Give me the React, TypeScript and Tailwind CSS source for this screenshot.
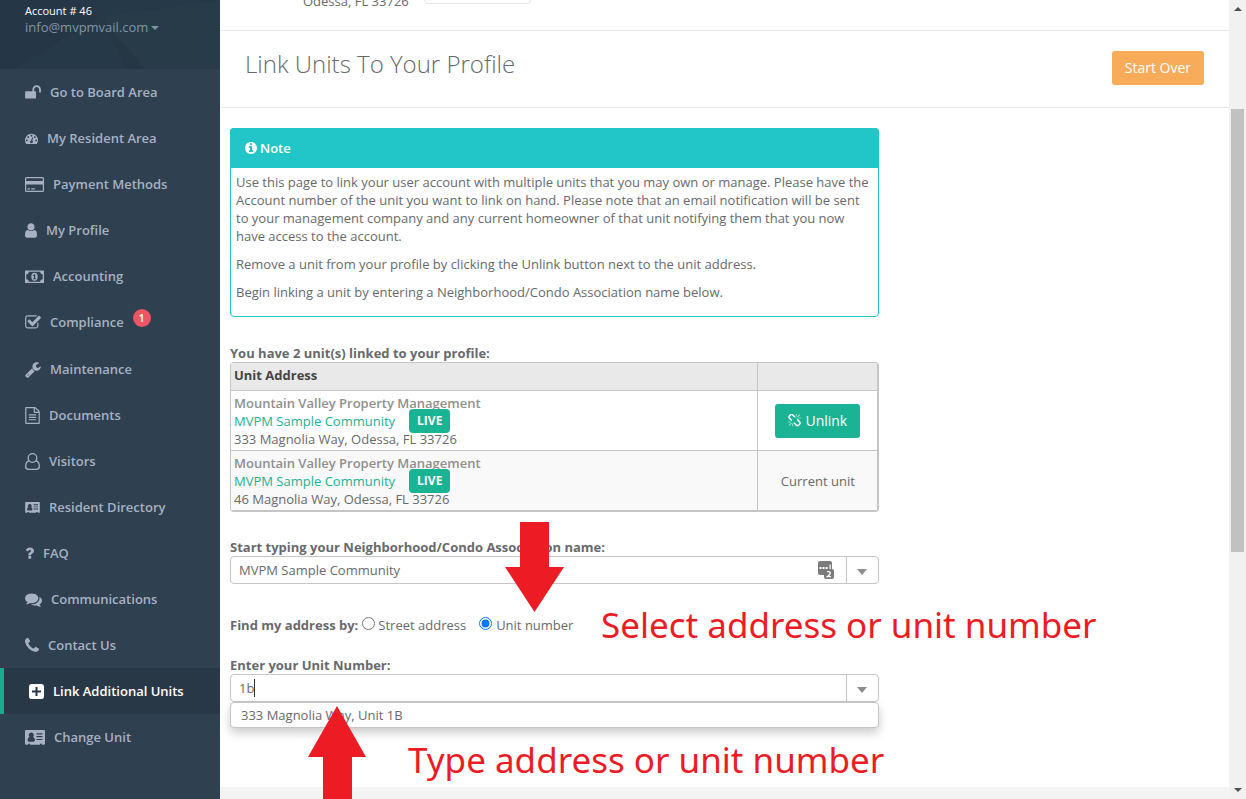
import type { ReactNode } from "react";
import { clsx } from "clsx";

type IconProps = { box?: string; className?: string; children: ReactNode };

const Icon = ({ box = "0 0 1792 1792", className, children }: IconProps) => (
    <svg viewBox={box} className={clsx("shrink-0", className)} fill="currentColor" aria-hidden="true">
        {children}
    </svg>
);

const UnlockIcon = () => (
    <Icon box="64 0 1664 1792" className="w-4 h-[17px]">
        <path d="M1728 576v256q0 26-19 45t-45 19h-64q-26 0-45-19t-19-45v-256q0-106-75-181t-181-75-181 75-75 181v192h96q40 0 68 28t28 68v576q0 40-28 68t-68 28h-960q-40 0-68-28t-28-68v-576q0-40 28-68t68-28h672v-192q0-185 131.5-316.5t316.5-131.5 316.5 131.5 131.5 316.5z" />
    </Icon>
);

const DashboardIcon = () => (
    <Icon className="size-[13px]">
        <path d="M384 1152q0-53-37.5-90.5t-90.5-37.5-90.5 37.5-37.5 90.5 37.5 90.5 90.5 37.5 90.5-37.5 37.5-90.5zm192-448q0-53-37.5-90.5t-90.5-37.5-90.5 37.5-37.5 90.5 37.5 90.5 90.5 37.5 90.5-37.5 37.5-90.5zm428 481l101-382q6-26-7.5-48.5t-38.5-29.5-48 6.5-30 39.5l-101 382q-60 5-107 43.5t-63 98.5q-20 77 20 146t117 89 146-20 89-117q16-60-6-117t-72-91zm660-33q0-53-37.5-90.5t-90.5-37.5-90.5 37.5-37.5 90.5 37.5 90.5 90.5 37.5 90.5-37.5 37.5-90.5zm-640-640q0-53-37.5-90.5t-90.5-37.5-90.5 37.5-37.5 90.5 37.5 90.5 90.5 37.5 90.5-37.5 37.5-90.5zm448 192q0-53-37.5-90.5t-90.5-37.5-90.5 37.5-37.5 90.5 37.5 90.5 90.5 37.5 90.5-37.5 37.5-90.5zm320 448q0 261-141 483-19 29-54 29h-1402q-35 0-54-29-141-221-141-483 0-182 71-348t191-286 286-191 348-71 348 71 286 191 191 286 71 348z" />
    </Icon>
);

const CardIcon = () => (
    <Icon box="0 0 19 17" className="w-[19px] h-[17px]">
        <path fillRule="evenodd" d="M1.600 1h15.800A1.600 1.600 0 0 1 19 2.600v11.800a1.600 1.600 0 0 1-1.600 1.600H1.600A1.600 1.600 0 0 1 0 14.400V2.600A1.600 1.600 0 0 1 1.600 1zM1.700 2.200a.5.5 0 0 0-.5.5V5h16.600V2.700a.5.5 0 0 0-.5-.5zM1.200 8.500v5.800a.5.5 0 0 0 .5.500h15.600a.5.500 0 0 0 .5-.5V8.500zM2.500 12.300h2.500v1.200H2.500zM6.200 12.300h3.700v1.200H6.200z" />
    </Icon>
);

const UserIcon = () => (
    <Icon box="256 0 1280 1792" className="w-3 h-[17px]">
        <path d="M1536 1399q0 109-62.500 187t-150.500 78h-854q-88 0-150.500-78t-62.500-187q0-85 8.500-160.500t31.500-152 58.500-131 94-89 134.500-34.500q131 128 313 128t313-128q76 0 134.500 34.500t94 89 58.500 131 31.500 152 8.500 160.500zm-256-887q0 159-112.500 271.500t-271.500 112.500-271.500-112.500-112.500-271.500 112.500-271.500 271.500-112.500 271.500 112.500 112.500 271.500z" />
    </Icon>
);

const MoneyIcon = () => (
    <Icon box="0 0 19 17" className="w-[19px] h-[17px]">
        <path fillRule="evenodd" d="M.6 2.500h17.800a.6.600 0 0 1 .6.600v11.300a.6.600 0 0 1-.6.600H.6a.6.600 0 0 1-.6-.6V3.100a.6.600 0 0 1 .6-.6zM3.800 3.800A2.500 2.500 0 0 1 1.300 6.300v5a2.500 2.500 0 0 1 2.500 2.500h11.400a2.500 2.500 0 0 1 2.500-2.500v-5a2.500 2.500 0 0 1-2.500-2.500z" />
        <ellipse cx="9.500" cy="8.800" rx="3.200" ry="4" />
        <path fill="#2f4050" d="M9.200 6.200h1v4.200h1v.9H7.900v-.9h1.100V7.700l-.8.500-.5-.7z" />
    </Icon>
);

const CheckIcon = () => (
    <Icon box="64 0 1664 1792" className="w-4 h-[17px]">
        <path d="M1472 930v318q0 119-84.500 203.500t-203.500 84.500h-832q-119 0-203.500-84.500t-84.500-203.500v-832q0-119 84.500-203.500t203.500-84.500h832q63 0 117 25 15 7 18 23 3 17-9 29l-49 49q-10 10-23 10-3 0-9-2-23-6-45-6h-832q-66 0-113 47t-47 113v832q0 66 47 113t113 47h832q66 0 113-47t47-113v-254q0-13 9-22l64-64q10-10 23-10 6 0 12 3 20 8 20 29zm231-489l-814 814q-24 24-57 24t-57-24l-430-430q-24-24-24-57t24-57l110-110q24-24 57-24t57 24l263 263 647-647q24-24 57-24t57 24l110 110q24 24 24 57t-24 57z" />
    </Icon>
);

const WrenchIcon = () => (
    <Icon box="64 0 1664 1792" className="w-4 h-[17px]">
        <path d="M448 1472q0-26-19-45t-45-19-45 19-19 45 19 45 45 19 45-19 19-45zm644-420l-682 682q-37 37-90 37-52 0-91-37l-106-108q-38-36-38-90 0-53 38-91l681-681q39 98 114.500 173.500t173.500 114.500zm634-435q0 39-23 106-47 134-164.500 217.500t-258.500 83.500q-185 0-316.500-131.500t-131.500-316.500 131.500-316.500 316.500-131.500q58 0 121.500 16.500t107.500 46.500q16 11 16 28t-16 28l-293 169v224l193 107q5-3 79-48.500t135.500-81 70.500-35.500q15 0 23.500 10t8.500 25z" />
    </Icon>
);

const FileIcon = () => (
    <Icon box="128 0 1536 1792" className="w-[15px] h-[17px]">
        <path d="M1596 380q28 28 48 76t20 88v1152q0 40-28 68t-68 28h-1344q-40 0-68-28t-28-68v-1600q0-40 28-68t68-28h896q40 0 88 20t76 48zm-444-244v376h376q-10-29-22-41l-313-313q-12-12-41-22zm384 1528v-1024h-416q-40 0-68-28t-28-68v-416h-768v1536h1280zm-1024-864q0-14 9-23t23-9h704q14 0 23 9t9 23v64q0 14-9 23t-23 9h-704q-14 0-23-9t-9-23v-64zm736 224q14 0 23 9t9 23v64q0 14-9 23t-23 9h-704q-14 0-23-9t-9-23v-64q0-14 9-23t23-9h704zm0 256q14 0 23 9t9 23v64q0 14-9 23t-23 9h-704q-14 0-23-9t-9-23v-64q0-14 9-23t23-9h704z" />
    </Icon>
);

const VisitorIcon = () => (
    <Icon box="0 0 15 17" className="w-[15px] h-[17px]">
        <g fill="none" stroke="currentColor" strokeWidth="1.300">
            <circle cx="7.500" cy="5" r="4.300" />
            <path d="M4.300 7.800C1.600 8.200.7 10.500.7 13.200c0 1.800 1.200 3.100 2.800 3.100h8c1.600 0 2.800-1.300 2.800-3.100 0-2.700-.9-5-3.600-5.400" />
        </g>
    </Icon>
);

const IdCardIcon = ({ className }: { className: string }) => (
    <Icon box="0 0 20 15" className={className}>
        <path fillRule="evenodd" d="M1.200 0h17.600A1.200 1.200 0 0 1 20 1.200v12.300a1.200 1.200 0 0 1-1.200 1.200H17v-1h-2v1H5v-1H3v1H1.200A1.200 1.200 0 0 1 0 13.500V1.200A1.200 1.200 0 0 1 1.200 0zM6.200 2.600a2.600 2.600 0 0 0-1.700 4.500C3.200 7.500 2.600 8.800 2.600 10.300c0 .8.500 1.400 1.200 1.400h4.900c.7 0 1.200-.6 1.200-1.400 0-1.500-.6-2.800-1.900-3.200a2.600 2.600 0 0 0-1.800-4.500zM11.500 3.200v1.200h6V3.200zM11.500 6v1.200h6V6zM11.500 8.900v1.200h6V8.900z" />
    </Icon>
);

const QuestionIcon = () => (
    <Icon box="384 128 1024 1536" className="w-[9px] h-[14px]">
        <path d="M1088 1256v240q0 16-12 28t-28 12h-240q-16 0-28-12t-12-28v-240q0-16 12-28t28-12h240q16 0 28 12t12 28zm316-600q0 54-15.500 101t-35 76.500-55 59.500-57.500 43.500-61 35.500q-41 23-68.500 65t-27.500 67q0 17-12 32.500t-28 15.500h-240q-15 0-25.500-18.500t-10.500-37.500v-45q0-83 65-156.500t143-108.500q59-27 84-56t25-76q0-42-46.500-74t-107.500-32q-65 0-108 29-35 25-107 115-13 16-31 16-12 0-25-8l-164-125q-13-10-15.500-25t5.500-28q160-266 464-266 80 0 161 31t146 83 106 127.500 41 158.500z" />
    </Icon>
);

const CommentsIcon = () => (
    <Icon className="size-[17px]">
        <path d="M1408 768q0 139-94 257t-256.500 186.500-353.500 68.500q-86 0-176-16-124 88-278 128-36 9-86 16h-3q-11 0-20.500-8t-11.500-21q-1-3-1-6.500t.5-6.500 2-6l2.500-5 3.500-5.500 4-5 4.500-5 4-4.500q5-6 23-25t26-29.500 22.500-29 25-38.500 20.500-44q-124-72-195-177t-71-224q0-139 94-257t256.500-186.500 353.500-68.500 353.500 68.500 256.500 186.500 94 257zm384 256q0 120-71 224.500t-195 176.500q10 24 20.500 44t25 38.500 22.500 29 26 29.500 23 25q1 1 4 4.500t4.500 5 4 5 3.500 5.500l2.500 5 2 6 .5 6.500-1 6.500q-3 14-13 22t-22 7q-50-7-86-16-154-40-278-128-90 16-176 16-271 0-472-132 58 4 88 4 161 0 309-45t264-129q125-92 192-212t67-254q0-77-23-152 129 71 204 178t75 230z" />
    </Icon>
);

const PhoneIcon = () => (
    <Icon box="192 64 1408 1664" className="w-[14px] h-[17px]">
        <path d="M1600 1240q0 27-10 70.500t-21 68.500q-21 50-122 106-94 51-186 51-27 0-53-3.500t-57.500-12.500-47-14.500-55.500-20.500-49-18q-98-35-175-83-127-79-264-216t-216-264q-48-77-83-175-3-9-18-49t-20.500-55.500-14.500-47-12.500-57.500-3.500-53q0-92 51-186 56-101 106-122 25-11 68.500-21t70.500-10q14 0 21 3 18 6 53 76 11 19 30 54t35 63.500 31 53.500q3 4 17.500 25t21.500 35.500 7 28.500q0 20-28.500 50t-62 55-62 53-28.500 46q0 9 5 22.500t8.500 20.500 14 24 11.500 19q76 137 174 235t235 174q2 1 19 11.500t24 14 20.500 8.500 22.500 5q18 0 46-28.500t53-62 55-62 50-28.500q14 0 28.500 7t35.500 21.500 25 17.500q25 15 53.500 31t63.500 35 54 30q70 35 76 53 3 7 3 21z" />
    </Icon>
);

const PlusSquareIcon = () => (
    <Icon box="0 0 15 15" className="size-[15px]">
        <path fillRule="evenodd" d="M2.800 0h9.400A2.800 2.800 0 0 1 15 2.800v9.400a2.800 2.800 0 0 1-2.800 2.800H2.800A2.800 2.800 0 0 1 0 12.200V2.800A2.800 2.800 0 0 1 2.800 0zM6.500 3v3.500H3v2h3.500V12h2V8.500H12v-2H8.500V3z" />
    </Icon>
);

const InfoIcon = () => (
    <Icon box="128 128 1536 1536" className="size-3">
        <path d="M1152 1376v-160q0-14-9-23t-23-9h-96v-512q0-14-9-23t-23-9h-320q-14 0-23 9t-9 23v160q0 14 9 23t23 9h96v320h-96q-14 0-23 9t-9 23v160q0 14 9 23t23 9h448q14 0 23-9t9-23zm-128-896v-160q0-14-9-23t-23-9h-192q-14 0-23 9t-9 23v160q0 14 9 23t23 9h192q14 0 23-9t9-23zm640 416q0 209-103 385.500t-279.500 279.500-385.500 103-385.500-103-279.500-279.500-103-385.500 103-385.500 279.500-279.500 385.500-103 385.500 103 279.500 279.500 103 385.500z" />
    </Icon>
);

const UnlinkIcon = () => (
    <Icon box="64 64 1664 1664" className="size-[13px]">
        <path d="M503 1271l-256 256q-10 9-23 9-12 0-23-9-9-10-9-23t9-23l256-256q10-9 23-9t23 9q9 10 9 23t-9 23zm169 41v320q0 14-9 23t-23 9-23-9-9-23v-320q0-14 9-23t23-9 23 9 9 23zm-224-224q0 14-9 23t-23 9h-320q-14 0-23-9t-9-23 9-23 23-9h320q14 0 23 9t9 23zm1264 128q0 120-85 203l-147 146q-83 83-203 83-121 0-204-85l-334-335q-21-21-42-56l239-18 273 274q28 28 68 27.500t68-27.500l147-146q28-28 28-67 0-40-28-68l-274-275 18-239q35 21 56 42l336 336q84 86 84 204zm-617-724l-239 18-273-274q-28-28-68-28-39 0-68 27l-147 146q-28 28-28 67 0 40 28 68l274 274-18 240q-35-21-56-42l-336-336q-84-86-84-204 0-120 85-203l147-146q83-83 203-83 121 0 204 85l334 335q21 21 42 56zm633 84q0 14-9 23t-23 9h-320q-14 0-23-9t-9-23 9-23 23-9h320q14 0 23 9t9 23zm-544-544v320q0 14-9 23t-23 9-23-9-9-23v-320q0-14 9-23t23-9 23 9 9 23zm407 151l-256 256q-11 9-23 9t-23-9q-9-10-9-23t9-23l256-256q10-9 23-9t23 9q9 10 9 23t-9 23z" />
    </Icon>
);

const navItems = [
    { label: "Go to Board Area", icon: <UnlockIcon /> },
    { label: "My Resident Area", icon: <DashboardIcon /> },
    { label: "Payment Methods", icon: <CardIcon /> },
    { label: "My Profile", icon: <UserIcon /> },
    { label: "Accounting", icon: <MoneyIcon /> },
    { label: "Compliance", icon: <CheckIcon />, badge: 1 },
    { label: "Maintenance", icon: <WrenchIcon /> },
    { label: "Documents", icon: <FileIcon /> },
    { label: "Visitors", icon: <VisitorIcon /> },
    { label: "Resident Directory", icon: <IdCardIcon className="w-[15px] h-[11px]" /> },
    { label: "FAQ", icon: <QuestionIcon /> },
    { label: "Communications", icon: <CommentsIcon /> },
    { label: "Contact Us", icon: <PhoneIcon /> },
    { label: "Link Additional Units", icon: <PlusSquareIcon />, active: true },
    { label: "Change Unit", icon: <IdCardIcon className="w-5 h-[15px]" /> },
];

const units = [
    { street: "333 Magnolia Way, Odessa, FL 33726", current: false },
    { street: "46 Magnolia Way, Odessa, FL 33726", current: true },
];

const Sidebar = () => (
    <aside className="w-[220px] shrink-0 bg-[#2f4050]">
        <div className="relative h-[69px] bg-[#263948] px-[25px] pt-[2px]">
            <svg className="absolute inset-0 size-full" viewBox="0 0 220 69" preserveAspectRatio="none" aria-hidden="true">
                <path d="M0 0h75l25 17L14 69H0z" fill="#253746" />
                <path d="M100 17L220 0v69h-75z" fill="#273b49" />
                <path d="M100 17l45 52h-18z" fill="#253645" />
            </svg>
            <div className="relative">
                <p className="text-[11px] leading-[18px] text-white">Account # 46</p>
                <a href="#account" className="flex items-center gap-[3px] text-[13px] leading-[14px] text-[#8095a8]">
                    info@mvpmvail.com
                    <svg viewBox="0 0 8 4" className="mt-[2px] w-2 h-1" fill="currentColor" aria-hidden="true"><path d="M0 0h8L4 4z" /></svg>
                </a>
            </div>
        </div>
        <nav>
            {navItems.map((item) => (
                <a
                    key={item.label}
                    href="#"
                    className={clsx(
                        "flex items-center gap-[9px] text-[13px] font-semibold",
                        item.badge ? "h-[47px] pb-px" : "h-[46px]",
                        item.active ? "border-l-4 border-[#19aa8d] bg-[#293846] pl-[25px] text-white" : "pl-[25px] text-[#a7b1c2]"
                    )}
                >
                    {item.icon}
                    <span>{item.label}</span>
                    {item.badge && (
                        <span className="mb-2 flex size-[18px] items-center justify-center rounded-full bg-[#ed5565] text-[11px] text-white">
                            {item.badge}
                        </span>
                    )}
                </a>
            ))}
        </nav>
    </aside>
);

type ComboProps = { id: string; label: string; value: string; children?: ReactNode };

const ComboBox = ({ id, label, value, children }: ComboProps) => (
    <div className="relative">
        <label htmlFor={id} className="block font-bold">{label}</label>
        <div className="relative flex h-7 rounded border border-[#c5c5c5] bg-white">
            <input id={id} defaultValue={value} className="min-w-0 grow bg-transparent px-2 outline-none" />
            {children}
            <button type="button" aria-label="Show options" className="flex w-8 items-center justify-center border-l border-[#c5c5c5] pr-px text-[#8c8c8e]">
                <svg viewBox="0 0 10 6" className="mt-1 h-[6px] w-[10px]" fill="currentColor" aria-hidden="true"><path d="M0 0h10L5 6z" /></svg>
            </button>
        </div>
    </div>
);

const PasswordManagerIcon = () => (
    <svg viewBox="0 0 16 18" className="mr-3 h-[18px] w-4 shrink-0 self-center" aria-hidden="true">
        <rect width="14" height="14" rx="2" fill="#7b7b7b" />
        <path d="M1.500 6h2v2h-2zM4.500 6h2v2h-2zM7.500 6h2v2h-2zM11.500 3.500h1.200V8h-1.200z" fill="#fff" />
        <rect x="6" y="8" width="10" height="10" rx="2" fill="#7b7b7b" />
        <path d="M9 10.700h1.700q1.600 0 1.600 1.300 0 .9-1.200 2L9.300 15.700h3.700" fill="none" stroke="#fff" strokeWidth="1.300" />
    </svg>
);

const NoteBox = () => (
    <section className="rounded border border-[#23c6c8]">
        <h2 className="-m-px flex h-10 items-center gap-[3px] rounded-t bg-[#23c6c8] px-[15px] font-semibold text-white">
            <InfoIcon />
            Note
        </h2>
        <div className="space-y-[10px] px-[5px] pt-[6px] pb-[15px]">
            <p>
                Use this page to link your user account with multiple units that you may own or manage. Please have the
                Account number of the unit you want to link on hand. Please note that an email notification will be sent
                to your management company and any current homeowner of that unit notifying them that you now
                have access to the account.
            </p>
            <p>Remove a unit from your profile by clicking the Unlink button next to the unit address.</p>
            <p>Begin linking a unit by entering a Neighborhood/Condo Association name below.</p>
        </div>
    </section>
);

const UnitsTable = () => (
    <table className="w-full border-separate border-spacing-0 rounded border border-r-2 border-b-2 border-[#c5c5c5]">
        <caption className="text-left font-bold">You have 2 unit(s) linked to your profile:</caption>
        <thead>
            <tr className="h-7 bg-[#e9e9e9] text-left text-[#454545]">
                <th className="border-b border-[#c5c5c5] px-[3px] pb-1">Unit Address</th>
                <th className="w-[120px] border-b border-l border-[#c5c5c5]" />
            </tr>
        </thead>
        <tbody>
            {units.map((unit) => (
                <tr key={unit.street} className="group h-[60px] last:h-[59px] even:bg-[#f9f9f9]">
                    <td className="border-b border-[#c5c5c5] px-[3px] pt-[3px] pb-[2px] align-top group-last:border-b-0">
                        <p className="font-semibold text-[#8f8f8f]">Mountain Valley Property Management</p>
                        <p className="flex h-[18px] items-center gap-[14px]">
                            <a href="#community" className="text-[#1ab394]">MVPM Sample Community</a>
                            <span className="flex h-6 items-center rounded bg-[#1ab394] px-2 font-bold text-white text-[12px]">LIVE</span>
                        </p>
                        <p>{unit.street}</p>
                    </td>
                    <td className="border-b border-l border-[#c5c5c5] text-center group-last:border-b-0">
                        {unit.current ? "Current unit" : (
                            <button type="button" className="inline-flex h-[34px] items-center gap-1 rounded-[3px] bg-[#1ab394] px-[13px] text-[14px] text-white">
                                <UnlinkIcon />
                                Unlink
                            </button>
                        )}
                    </td>
                </tr>
            ))}
        </tbody>
    </table>
);

const ScrollBar = () => (
    <div className="flex w-[17px] shrink-0 flex-col items-center bg-[#f1f1f1] text-[#505050]" aria-hidden="true">
        <div className="flex h-[109px] pt-[7px]">
            <svg viewBox="0 0 8 4" className="h-1 w-2" fill="currentColor"><path d="M0 4h8L4 0z" /></svg>
        </div>
        <div className="h-[443px] w-[13px] bg-[#c1c1c1]" />
        <svg viewBox="0 0 8 4" className="mt-auto mb-[7px] h-1 w-2" fill="currentColor"><path d="M0 0h8L4 4z" /></svg>
    </div>
);

const Annotations = () => (
    <div className="pointer-events-none absolute inset-0 overflow-hidden whitespace-nowrap font-['Noto_Sans'] text-[35px] leading-[48px] text-[#ed1c24]">
        <svg viewBox="0 0 59 90" className="absolute left-[285px] top-[522px] h-[90px] w-[59px]" fill="currentColor" aria-hidden="true">
            <path d="M15 0h29v45h15L29.500 90 0 45h15z" />
        </svg>
        <svg viewBox="0 0 58 93" className="absolute left-[88px] top-[706px] h-[93px] w-[58px]" fill="currentColor" aria-hidden="true">
            <path d="M29 0l29 51H44v42H15V51H0z" />
        </svg>
        <p className="absolute left-[381px] top-[601px]">Select address or unit number</p>
        <p className="absolute left-[188px] top-[736px]">Type address or unit number</p>
    </div>
);

export default function App() {
    return (
        <div className="flex h-screen overflow-hidden bg-white font-['Open_Sans',sans-serif] text-[13px] leading-[18px] text-[#676a6c]">
            <Sidebar />
            <main className="relative flex min-w-0 grow flex-col">
                <div className="flex h-[31px] shrink-0 items-end gap-[15px] overflow-hidden border-b border-[#e7eaec] pl-[83px] pb-5">
                    <span>Odessa, FL 33726</span>
                    <div className="mb-[6px] h-5 w-[107px] shrink-0 rounded border border-[#e5e6e7]" />
                </div>
                <header className="flex h-[77px] shrink-0 items-center justify-between border-b border-[#e7eaec] px-[25px] pb-[2px]">
                    <h1 className="mb-2 text-[24px] font-light leading-[30px]">Link Units To Your Profile</h1>
                    <button type="button" className="h-[34px] rounded-[3px] bg-[#f8ac59] px-[13px] text-[14px] text-white">Start Over</button>
                </header>
                <div className="grow px-[10px] pt-5">
                    <div className="w-2/3 pr-[10px]">
                        <NoteBox />
                        <div className="mt-[27px]"><UnitsTable /></div>
                        <div className="mt-[26px]">
                            <ComboBox id="association" label="Start typing your Neighborhood/Condo Association name:" value="MVPM Sample Community">
                                <PasswordManagerIcon />
                            </ComboBox>
                        </div>
                        <fieldset className="mt-8 flex items-center">
                            <legend className="float-left font-bold">Find my address by:</legend>
                            <label className="ml-1 flex items-center gap-[3px]">
                                <input type="radio" name="find-by" className="mb-[3px] size-[13px]" />
                                Street address
                            </label>
                            <label className="ml-[13px] flex items-center gap-1">
                                <input type="radio" name="find-by" defaultChecked className="mb-[3px] size-[13px]" />
                                Unit number
                            </label>
                        </fieldset>
                        <div className="relative mt-[22px]">
                            <ComboBox id="unit" label="Enter your Unit Number:" value="1b">
                                <span className="absolute left-[23px] top-1 h-[18px] w-px bg-[#333333]" />
                            </ComboBox>
                            <ul className="absolute inset-x-0 top-full h-[26px] rounded border border-[#c5c5c5] bg-white px-[10px] leading-6 shadow-[0_5px_10px_rgba(0,0,0,0.2)]">
                                <li>333 Magnolia Way, Unit 1B</li>
                            </ul>
                        </div>
                    </div>
                </div>
                <footer className="h-3 shrink-0 bg-[#f3f3f4]" />
                <Annotations />
            </main>
            <ScrollBar />
        </div>
    );
}
